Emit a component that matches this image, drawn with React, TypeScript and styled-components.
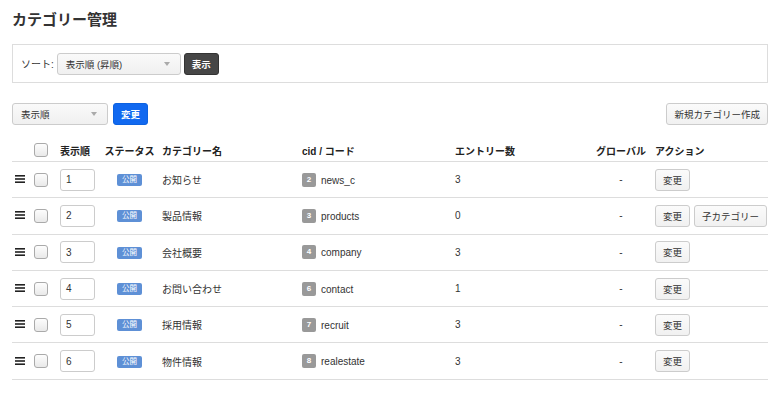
import React from "react"
import styled, { createGlobalStyle } from "styled-components"

const GlobalStyle = createGlobalStyle`
  body {
    margin: 0;
    background: #fff;
    font-family: "Liberation Sans", "Noto Sans CJK JP", sans-serif;
    font-size: 10px;
    color: #333;
  }
`

const Page = styled.div`
  padding: 10px 12px;
`

const Title = styled.h1`
  margin: 0;
  font-size: 15px;
  line-height: 20px;
  font-weight: bold;
  color: #333;
`

const SortPanel = styled.div`
  margin-top: 14px;
  height: 37px;
  border: 1px solid #ddd;
  display: flex;
  align-items: center;
  gap: 3px;
  padding: 0 8px;
`

const Label = styled.span`
  font-size: 10px;
`

const Select = styled.div<{ width: number }>`
  box-sizing: border-box;
  width: ${p => p.width}px;
  height: 22px;
  border: 1px solid #ccc;
  border-radius: 3px;
  background: linear-gradient(#fafafa, #f0f0f0);
  display: flex;
  align-items: center;
  justify-content: space-between;
  padding: 0 10px 0 8px;
  font-size: 9.5px;
  color: #333;
`

const Caret = styled.span`
  width: 0;
  height: 0;
  border-left: 3px solid transparent;
  border-right: 3px solid transparent;
  border-top: 4px solid #aaa;
`

const Button = styled.button<{ variant?: "dark" | "primary" }>`
  box-sizing: border-box;
  height: 22px;
  padding: 0 7px;
  border-radius: 3px;
  font-family: inherit;
  font-size: 9.5px;
  font-weight: ${p => (p.variant ? "bold" : "normal")};
  color: ${p => (p.variant ? "#fff" : "#333")};
  border: 1px solid
    ${p =>
      p.variant === "dark" ? "#333" : p.variant === "primary" ? "#0d62e0" : "#ccc"};
  background: ${p =>
    p.variant === "dark"
      ? "#464646"
      : p.variant === "primary"
        ? "#1169f0"
        : "linear-gradient(#fbfbfb, #f1f1f1)"};
`

const Toolbar = styled.div`
  margin-top: 20px;
  display: flex;
  align-items: center;
  gap: 5px;
`

const Spacer = styled.div`
  flex: 1;
`

const Table = styled.table`
  margin-top: 14px;
  width: 756px;
  table-layout: fixed;
  border-collapse: collapse;
`

const Th = styled.th<{ align?: string }>`
  height: 22px;
  padding: 0 3px;
  text-align: ${p => p.align || "left"};
  font-size: 10px;
  font-weight: bold;
  color: #222;
  border-bottom: 1px solid #ddd;
  white-space: nowrap;
`

const Tr = styled.tr`
  height: 36.3px;
  border-bottom: 1px solid #ddd;
`

const Td = styled.td<{ align?: string }>`
  padding: 0 3px;
  text-align: ${p => p.align || "left"};
  vertical-align: middle;
  white-space: nowrap;
`

const Check = styled.span`
  display: block;
  box-sizing: border-box;
  width: 14px;
  height: 14px;
  border: 1px solid #aaa;
  border-radius: 3px;
  background: linear-gradient(#fdfdfd, #e9e9e9);
`

const NumInput = styled.div`
  box-sizing: border-box;
  width: 35px;
  height: 22px;
  border: 1px solid #ccc;
  border-radius: 3px;
  padding-left: 5px;
  display: flex;
  align-items: center;
  font-size: 10px;
`

const Status = styled.span`
  display: inline-block;
  width: 25px;
  height: 12px;
  line-height: 12px;
  background: #5e90d6;
  border-radius: 2px;
  color: #fff;
  font-size: 7.5px;
  text-align: center;
`

const Cid = styled.span`
  display: inline-block;
  width: 14px;
  height: 14px;
  line-height: 14px;
  background: #999;
  border-radius: 2px;
  color: #fff;
  font-size: 8px;
  font-weight: bold;
  text-align: center;
  margin-right: 5px;
  vertical-align: middle;
`

const Code = styled.span`
  vertical-align: middle;
`

const Actions = styled.div`
  display: flex;
  gap: 4px;
`

function Handle() {
  return (
    <svg width="10" height="8" viewBox="0 0 10 8">
      <rect x="0" y="0" width="10" height="1.6" fill="#222" />
      <rect x="0" y="3.2" width="10" height="1.6" fill="#222" />
      <rect x="0" y="6.4" width="10" height="1.6" fill="#222" />
    </svg>
  )
}

const rows = [
  { order: 1, name: "お知らせ", cid: 2, code: "news_c", entries: 3 },
  { order: 2, name: "製品情報", cid: 3, code: "products", entries: 0, child: true },
  { order: 3, name: "会社概要", cid: 4, code: "company", entries: 3 },
  { order: 4, name: "お問い合わせ", cid: 6, code: "contact", entries: 1 },
  { order: 5, name: "採用情報", cid: 7, code: "recruit", entries: 3 },
  { order: 6, name: "物件情報", cid: 8, code: "realestate", entries: 3 }
]

export default function App() {
  return (
    <Page>
      <GlobalStyle />
      <Title>カテゴリー管理</Title>
      <SortPanel>
        <Label>ソート:</Label>
        <Select width={124}>
          表示順 (昇順)
          <Caret />
        </Select>
        <Button variant="dark">表示</Button>
      </SortPanel>
      <Toolbar>
        <Select width={96}>
          表示順
          <Caret />
        </Select>
        <Button variant="primary">変更</Button>
        <Spacer />
        <Button>新規カテゴリー作成</Button>
      </Toolbar>
      <Table>
        <colgroup>
          <col style={{ width: 19 }} />
          <col style={{ width: 26 }} />
          <col style={{ width: 43 }} />
          <col style={{ width: 59 }} />
          <col style={{ width: 140 }} />
          <col style={{ width: 153 }} />
          <col style={{ width: 138 }} />
          <col style={{ width: 62 }} />
          <col style={{ width: 116 }} />
        </colgroup>
        <thead>
          <tr>
            <Th />
            <Th>
              <Check />
            </Th>
            <Th>表示順</Th>
            <Th align="center">ステータス</Th>
            <Th>カテゴリー名</Th>
            <Th>cid / コード</Th>
            <Th>エントリー数</Th>
            <Th align="center">グローバル</Th>
            <Th>アクション</Th>
          </tr>
        </thead>
        <tbody>
          {rows.map(r => (
            <Tr key={r.order}>
              <Td>
                <Handle />
              </Td>
              <Td>
                <Check />
              </Td>
              <Td>
                <NumInput>{r.order}</NumInput>
              </Td>
              <Td align="center">
                <Status>公開</Status>
              </Td>
              <Td>{r.name}</Td>
              <Td>
                <Cid>{r.cid}</Cid>
                <Code>{r.code}</Code>
              </Td>
              <Td>{r.entries}</Td>
              <Td align="center">-</Td>
              <Td>
                <Actions>
                  <Button>変更</Button>
                  {r.child && <Button>子カテゴリー</Button>}
                </Actions>
              </Td>
            </Tr>
          ))}
        </tbody>
      </Table>
    </Page>
  )
}
